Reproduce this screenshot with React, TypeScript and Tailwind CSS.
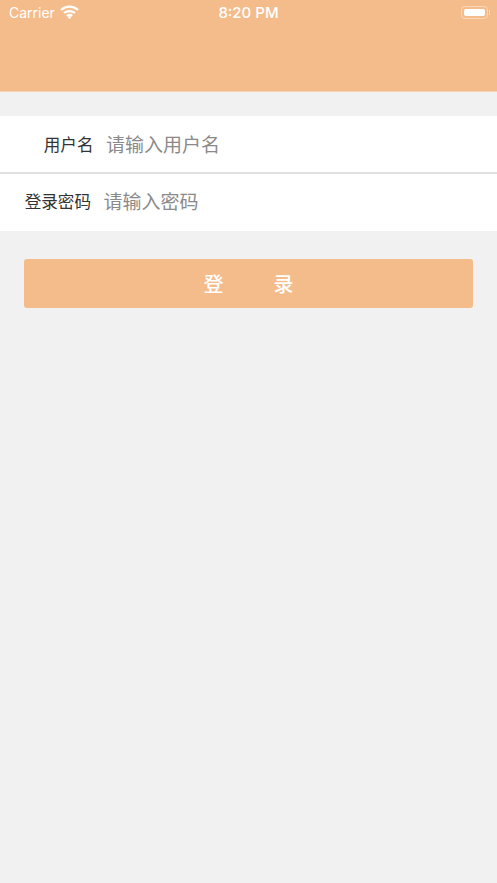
import "react";

const cjk = "font-['Noto_Sans_CJK_SC','Noto_Sans',sans-serif]";

function Wifi() {
  return (
    <svg width="19" height="14" viewBox="0 0 19 14" fill="none" stroke="white" strokeWidth="2.2">
      <path d="M1 5 C5.8 0.6 13.2 0.6 18 5" />
      <path d="M4 8 C7 5.4 12 5.4 15 8" />
      <path d="M6.8 10.8 C8.4 9.6 10.6 9.6 12.2 10.8" />
      <circle cx="9.5" cy="12.4" r="1.3" fill="white" stroke="none" />
    </svg>
  );
}

function Battery() {
  return (
    <div className="flex -translate-y-[1px] items-center gap-[1px]">
      <div className="flex h-[13px] w-[27px] rounded-[4px] border border-white/40 p-[2px]">
        <div className="flex-1 rounded-[2px] bg-white" />
      </div>
      <div className="h-[5px] w-[1px] bg-white/50" />
    </div>
  );
}

function Row({ label, placeholder, labelWidth, height, pad }: { label: string; placeholder: string; labelWidth: string; height: string; pad: string }) {
  return (
    <div className={`flex ${height} items-center bg-white ${pad} ${cjk}`}>
      <span className={`${labelWidth} shrink-0 text-right text-[16.6px] text-[#333]`}>{label}</span>
      <span className="ml-[12.5px] text-[19px] text-[#8a8a8a]">{placeholder}</span>
    </div>
  );
}

export default function App() {
  return (
    <div className="flex min-h-[883px] flex-col bg-[#f1f1f1]">
      <div className="h-[92px] border-b border-[#f7d2b2] bg-[#f5bc8b]">
        <div className="relative flex h-[26px] items-center pl-[9px] pr-[7px] text-white">
          <span className="-translate-y-[1px] font-['Inter',sans-serif] text-[14px]">Carrier</span>
          <span className="ml-[5px] -translate-y-[1px]"><Wifi /></span>
          <span className="absolute left-1/2 -translate-x-1/2 font-['Inter',sans-serif] text-[15px] font-medium">8:20 PM</span>
          <span className="ml-auto"><Battery /></span>
        </div>
      </div>

      <div className="mt-[24px]">
        <Row label="用户名" placeholder="请输入用户名" labelWidth="w-[93.5px]" height="h-[56px]" pad="pb-0" />
        <div className="h-[2px] bg-[#e0e0e0]" />
        <Row label="登录密码" placeholder="请输入密码" labelWidth="w-[91px]" height="h-[57px]" pad="pb-[2px]" />
      </div>

      <button className={`mx-[24px] mt-[28px] flex h-[49px] items-center justify-center rounded-[3px] bg-[#f5bc8b] text-[20px] font-medium text-white ${cjk}`}>
        <span>登</span>
        <span className="ml-[50px]">录</span>
      </button>
    </div>
  );
}
